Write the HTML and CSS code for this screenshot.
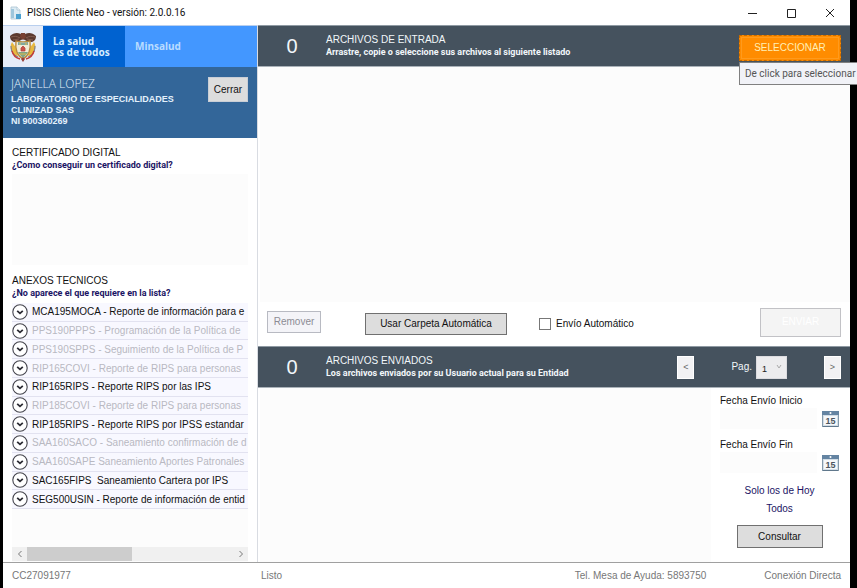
FILE: index.html
```html
<!DOCTYPE html>
<html lang="es">
<head>
<meta charset="utf-8">
<title>PISIS Cliente Neo</title>
<link rel="stylesheet" href="styles.css">
</head>
<body>
<svg class="defs" aria-hidden="true">
  <symbol id="chevron" viewBox="0 0 16 16">
    <circle cx="8" cy="8" r="7.2" fill="#fff" stroke="#45454d" stroke-width="1.1"/>
    <path d="M5.2 6.9 8 9.4l2.8-2.5" fill="none" stroke="#2c2c34" stroke-width="1.8"/>
  </symbol>
  <symbol id="calendar" viewBox="0 0 17 16">
    <rect x=".5" y=".5" width="16" height="15" fill="#d3dee7" stroke="#8399ab"/>
    <rect x="0" y="0" width="17" height="4" fill="#6484a2"/>
    <circle cx="8.5" cy="2" r="1" fill="#fff"/>
    <rect x="2" y="5" width="13" height="9" fill="#f6f8fa"/>
    <path d="M1 15.5h15" stroke="#60788c"/>
    <text x="8.5" y="13" text-anchor="middle" class="cal-day">15</text>
  </symbol>
</svg>
<div class="window">
  <header class="titlebar">
    <svg class="app-icon" viewBox="0 0 12 14" aria-hidden="true">
      <path d="M1 1h6l3 3v9H1z" fill="#dcebf3" stroke="#a9c3d2" stroke-width=".8"/>
      <path d="M7 1v3h3" fill="#f6fbfd" stroke="#a9c3d2" stroke-width=".8"/>
      <path d="M1 3h3v9H1z" fill="#9ec6dc"/>
      <path d="M6 8h5v5H6z" fill="#4aa0cf"/>
    </svg>
    <h1>PISIS Cliente Neo - versión: 2.0.0.16</h1>
    <div class="controls">
      <button aria-label="Minimizar"><svg viewBox="0 0 10 10"><path d="M0 5.5h9"/></svg></button>
      <button aria-label="Maximizar"><svg viewBox="0 0 10 10"><path d="M.5 1.5h8v8h-8z"/></svg></button>
      <button aria-label="Cerrar ventana"><svg viewBox="0 0 10 10"><path d="M0 1l8 8M8 1l-8 8"/></svg></button>
    </div>
  </header>

  <div class="workspace">
    <aside class="sidebar">
      <div class="brand">
        <div class="brand-shield">
          <svg viewBox="0 0 28 30" aria-hidden="true">
            <path d="M14 4C11 0 5 0 1 4c0 3 1 5 4 6 3 0 6-1 9-3 3 2 6 3 9 3 3-1 4-3 4-6-4-4-10-4-13 0z" fill="#5c392f"/>
            <path d="M2 5c3-1 6-1 9 1M26 5c-3-1-6-1-9 1M4 8l6-1M24 8l-6-1" fill="none" stroke="#8d6658" stroke-width=".8"/>
            <path d="M12 1h4l1 4-3 3-3-3z" fill="#783f31"/>
            <path d="M3 10c-3 5-1 12 5 15l2-5z" fill="#e8b83f"/>
            <path d="M25 10c3 5 1 12-5 15l-2-5z" fill="#e8b83f"/>
            <path d="M2 14c0 5 2 9 7 11M26 14c0 5-2 9-7 11" fill="none" stroke="#66739d" stroke-width="1"/>
            <path d="M3 19c1 4 4 7 8 8M25 19c-1 4-4 7-8 8" fill="none" stroke="#c33c38" stroke-width="1.4"/>
            <path d="M7 9c4 1 10 1 14 0 1 8 0 14-7 18C7 23 6 17 7 9z" fill="#f1ebd7" stroke="#b98a3c" stroke-width="1.4"/>
            <path d="M9 10c3 1 7 1 10 0v3H9z" fill="#7fa9a0"/>
            <path d="M9 20h10c-1 2-3 4-5 6-2-2-4-4-5-6z" fill="#7fa585"/>
            <path d="M12 16l2-2 2 2v3h-4z" fill="#c9504a" stroke="#b4453f" stroke-width=".8"/>
            <path d="M10 12h2M16 12h2M11 22h6" stroke="#e6ba4a" stroke-width="1.2"/>
            <path d="M12 27l2-2 2 2-2 3z" fill="#984037"/>
          </svg>
        </div>
        <div class="brand-motto">La salud<br>es de todos</div>
        <div class="brand-name">Minsalud</div>
      </div>
      <section class="user">
        <div>
          <h2>JANELLA LOPEZ</h2>
          <p>LABORATORIO DE ESPECIALIDADES CLINIZAD SAS<br>NI 900360269</p>
        </div>
        <button class="btn btn-close">Cerrar</button>
      </section>
      <section class="certificate">
        <h3>CERTIFICADO DIGITAL</h3>
        <a href="#cert">¿Como conseguir un certificado digital?</a>
        <div class="cert-box"></div>
      </section>
      <section class="annexes">
        <h3>ANEXOS TECNICOS</h3>
        <a href="#anexos">¿No aparece el que requiere en la lista?</a>
        <div class="annex-box">
          <ul>
            <li><svg><use href="#chevron"/></svg><span>MCA195MOCA - Reporte de información para e</span></li>
            <li class="off"><svg><use href="#chevron"/></svg><span>PPS190PPPS - Programación de la Política de</span></li>
            <li class="off"><svg><use href="#chevron"/></svg><span>PPS190SPPS - Seguimiento de la Política de P</span></li>
            <li class="off"><svg><use href="#chevron"/></svg><span>RIP165COVI - Reporte de RIPS para personas</span></li>
            <li><svg><use href="#chevron"/></svg><span>RIP165RIPS - Reporte RIPS por las IPS</span></li>
            <li class="off"><svg><use href="#chevron"/></svg><span>RIP185COVI - Reporte de RIPS para personas</span></li>
            <li><svg><use href="#chevron"/></svg><span>RIP185RIPS - Reporte RIPS por IPSS estandar</span></li>
            <li class="off"><svg><use href="#chevron"/></svg><span>SAA160SACO - Saneamiento confirmación de d</span></li>
            <li class="off"><svg><use href="#chevron"/></svg><span>SAA160SAPE Saneamiento Aportes Patronales</span></li>
            <li><svg><use href="#chevron"/></svg><span>SAC165FIPS&nbsp; Saneamiento Cartera por IPS</span></li>
            <li><svg><use href="#chevron"/></svg><span>SEG500USIN - Reporte de información de entid</span></li>
          </ul>
          <div class="scrollbar">
            <button aria-label="Desplazar a la izquierda"><svg viewBox="0 0 6 8"><path d="M4.5 1l-3 3 3 3"/></svg></button>
            <div class="track"><div class="thumb"></div></div>
            <button aria-label="Desplazar a la derecha"><svg viewBox="0 0 6 8"><path d="M1.5 1l3 3-3 3"/></svg></button>
          </div>
        </div>
      </section>
    </aside>

    <main class="content">
      <header class="band">
        <span class="count">0</span>
        <div class="band-text">
          <h2>ARCHIVOS DE ENTRADA</h2>
          <p>Arrastre, copie o seleccione sus archivos al siguiente listado</p>
        </div>
        <div class="select-wrap">
          <button class="btn-select">SELECCIONAR</button>
          <div class="tooltip" role="tooltip">De click para seleccionar</div>
        </div>
      </header>
      <div class="inbox"></div>
      <div class="actions">
        <button class="btn btn-remove" disabled>Remover</button>
        <button class="btn btn-folder">Usar Carpeta Automática</button>
        <label class="auto"><input type="checkbox">Envío Automático</label>
        <button class="btn-send" disabled>ENVIAR</button>
      </div>
      <header class="band">
        <span class="count">0</span>
        <div class="band-text">
          <h2>ARCHIVOS ENVIADOS</h2>
          <p>Los archivos enviados por su Usuario actual para su Entidad</p>
        </div>
        <div class="pager">
          <button aria-label="Página anterior">&lt;</button>
          <label for="page">Pag.</label>
          <div class="page-pick">
            <select id="page"><option>1</option></select>
            <svg viewBox="0 0 6 6" aria-hidden="true"><path d="M1 1l2 3 2-3"/></svg>
          </div>
          <button aria-label="Página siguiente">&gt;</button>
        </div>
      </header>
      <div class="sent">
        <div class="sent-list"></div>
        <form class="filters">
          <label for="from">Fecha Envío Inicio</label>
          <div class="date"><input id="from" type="text"><button type="button" aria-label="Elegir fecha de inicio"><svg><use href="#calendar"/></svg></button></div>
          <label for="to">Fecha Envío Fin</label>
          <div class="date"><input id="to" type="text"><button type="button" aria-label="Elegir fecha de fin"><svg><use href="#calendar"/></svg></button></div>
          <nav><a href="#hoy">Solo los de Hoy</a><a href="#todos">Todos</a></nav>
          <button type="button" class="btn btn-query">Consultar</button>
        </form>
      </div>
    </main>
  </div>

  <footer class="status">
    <span>CC27091977</span>
    <span>Listo</span>
    <span class="help">Tel. Mesa de Ayuda: 5893750</span>
    <span>Conexión Directa</span>
  </footer>
</div>
</body>
</html>
```
FILE: styles.css
```css
* { box-sizing: border-box; }

body {
  margin: 0;
  background: #000;
  color: #111;
  font: 10px/12px "Liberation Sans", Arial, sans-serif;
  overflow: hidden;
}

h1, h2, h3, p, ul { margin: 0; padding: 0; font: inherit; }
button, input, select { font: inherit; color: inherit; margin: 0; padding: 0; border-radius: 0; }
a { color: #1b1464; text-decoration: none; }
svg { display: block; }
.defs { position: absolute; width: 0; height: 0; }
.cal-day { font: bold 9px "Liberation Sans", Arial, sans-serif; fill: #4b5560; }

.window {
  display: flex;
  flex-direction: column;
  min-height: 100vh;
  margin: 0 7px 0 3px;
  background: #fff;
}

/* Title bar */
.titlebar {
  display: flex;
  align-items: center;
  height: 25px;
  padding-left: 7px;
  gap: 5px;
}
.app-icon { width: 12px; height: 14px; }
.titlebar h1 { flex: 1; font: 10px/14px Roboto, "Noto Sans", sans-serif; color: #111; }
.controls { display: flex; }
.controls button {
  display: grid;
  place-items: center;
  width: 39px;
  height: 24px;
  border: 0;
  background: none;
}
.controls svg { width: 10px; height: 10px; fill: none; stroke: #222; stroke-width: 1; }

.workspace { display: flex; flex: 1; }

/* Sidebar */
.sidebar {
  display: flex;
  flex-direction: column;
  width: 255px;
  flex: none;
  border-right: 1px solid #d9dce2;
}
.brand {
  display: flex;
  height: 42px;
  border-top: 1px solid #b9cfee;
  color: #cfe6ff;
  font: bold 10px/11px "Noto Sans", "Open Sans", sans-serif;
}
.brand > div { display: flex; align-items: center; }
.brand-shield { width: 40px; justify-content: center; background: #e6ecf8; }
.brand-shield svg { width: 28px; height: 30px; }
.brand .brand-motto { display: block; width: 82px; padding: 10px 0 0 10px; background: #0062d0; color: #d6edff; }
.brand-name { flex: 1; padding-left: 10px; background: #4397ff; color: #b9dcff; }

.user {
  display: flex;
  justify-content: space-between;
  align-items: flex-start;
  height: 71px;
  padding: 9px 9px 0 8px;
  background: #336699;
  color: #e4f1fc;
}
.user h2 { font: 300 12px/16px "Open Sans", "Noto Sans", sans-serif; }
.user p { width: 180px; margin-top: 2px; font-size: 9px; line-height: 11px; font-weight: bold; }

.btn { border: 1px solid #707070; background: #ddd; color: #111; }
.btn-close { width: 40px; height: 25px; margin-top: 1px; border-color: #c9ced6; }

.certificate, .annexes { padding: 0 9px; }
.certificate { padding-top: 9px; }
.certificate a, .annexes a { display: block; font: bold 9px/13px Roboto, Arial, sans-serif; white-space: nowrap; }
.cert-box { height: 91px; margin-top: 2px; background: #fcfcfc; }
.annexes { display: flex; flex: 1; flex-direction: column; padding-top: 10px; }
.annex-box { display: flex; flex: 1; flex-direction: column; margin-top: 3px; background: #fcfcfc; }
.annex-box ul {
  display: grid;
  grid-auto-rows: 1fr;
  height: 206px;
  list-style: none;
  overflow: hidden;
}
.annex-box li {
  display: flex;
  align-items: center;
  gap: 4px;
  border-bottom: 1px solid #e2e2f0;
  background: #f8f8ff;
  white-space: nowrap;
}
.annex-box li svg { width: 16px; height: 16px; flex: none; }
.annex-box li span { padding-top: 1px; }
.annex-box .off { color: #b9b9c2; }

.scrollbar { display: flex; height: 14px; margin-top: auto; margin-bottom: 1px; background: #f0f0f0; }
.scrollbar button { display: grid; place-items: center; width: 15px; border: 0; background: none; }
.scrollbar svg { width: 6px; height: 8px; fill: none; stroke: #777; }
.track { flex: 1; }
.thumb { width: 51%; height: 100%; background: #cdcdcd; }

/* Content */
.content { display: flex; flex: 1; flex-direction: column; min-width: 0; }
.band {
  display: flex;
  align-items: center;
  height: 42px;
  padding-right: 9px;
  border-top: 1px solid #8f9aa3;
  border-bottom: 1px solid #aab2b9;
  background: #45525e;
  color: #f2f7fa;
}
.count { width: 68px; text-align: center; font-size: 20px; line-height: 24px; }
.band-text { flex: 1; }
.band h2 { line-height: 13px; }
.band p { font: bold 9px/13px Roboto, Arial, sans-serif; white-space: nowrap; }

.select-wrap { position: relative; margin-top: 4px; }
.btn-select {
  display: block;
  width: 102px;
  height: 26px;
  border: 1px dashed #c56a00;
  outline: 1px solid #ff9a1c;
  outline-offset: -3px;
  background: #ff8c00;
  color: #ffefb5;
}
.tooltip {
  position: absolute;
  top: 27px;
  left: 0;
  z-index: 2;
  padding: 3px 4px 3px 5px;
  border: 1px solid #808080;
  background: #f1f2f7;
  color: #555;
  font: 10px/15px Roboto, "Noto Sans", sans-serif;
  white-space: nowrap;
}

.inbox { flex: 1; margin-left: 2px; background: #fcfcfc; }
.actions { display: flex; align-items: center; height: 44px; padding: 0 9px; }
.btn-remove { width: 54px; height: 22px; margin-bottom: 4px; border-color: #b8bac2; background: #f4f4f8; color: #8c8c94; }
.btn-folder { width: 142px; height: 22px; margin-left: 44px; }
.auto { display: flex; align-items: center; gap: 5px; margin-left: 32px; }
.auto input { appearance: none; width: 12px; height: 12px; border: 1px solid #777; background: #fff; }
.btn-send { width: 81px; height: 29px; margin-left: auto; margin-bottom: 4px; border: 1px solid #c2c2c6; background: #f4f4f4; color: #fff; }

.pager { display: flex; align-items: center; }
.pager > button { width: 17px; height: 23px; border: 1px solid #fff; background: #f2f2f4; color: #666; font-size: 9px; }
.pager label { margin-left: 37px; }
.page-pick { position: relative; margin: 0 37px 0 4px; }
.page-pick select { appearance: none; display: block; width: 31px; height: 23px; padding: 4px 0 0 5px; border: 1px solid #dcdce0; background: #ececee; color: #222; font-size: 9px; }
.page-pick svg { position: absolute; top: 8px; right: 5px; width: 6px; height: 6px; fill: none; stroke: #aaa; pointer-events: none; }

.sent { display: flex; height: 174px; }
.sent-list { flex: 1; margin-left: 2px; background: #fcfcfc; }
.filters { display: flex; flex-direction: column; width: 139px; padding: 6px 11px 0 9px; }
.filters label { line-height: 14px; }
.date { display: flex; justify-content: space-between; align-items: center; margin-bottom: 9px; }
.date input { width: 97px; height: 21px; border: 0; background: #fcfcfc; }
.date button { border: 0; background: none; }
.date svg { width: 17px; height: 16px; }
.filters nav { display: flex; flex-direction: column; align-items: center; line-height: 18px; }
.btn-query { width: 86px; height: 23px; margin-top: 7px; align-self: center; }

/* Status bar */
.status {
  display: grid;
  grid-template-columns: 249px 1fr auto auto;
  align-items: center;
  height: 26px;
  padding: 1px 9px 0;
  border-top: 1px solid #a0a0a0;
  color: #777;
}
.status .help { margin-right: 58px; }
```
